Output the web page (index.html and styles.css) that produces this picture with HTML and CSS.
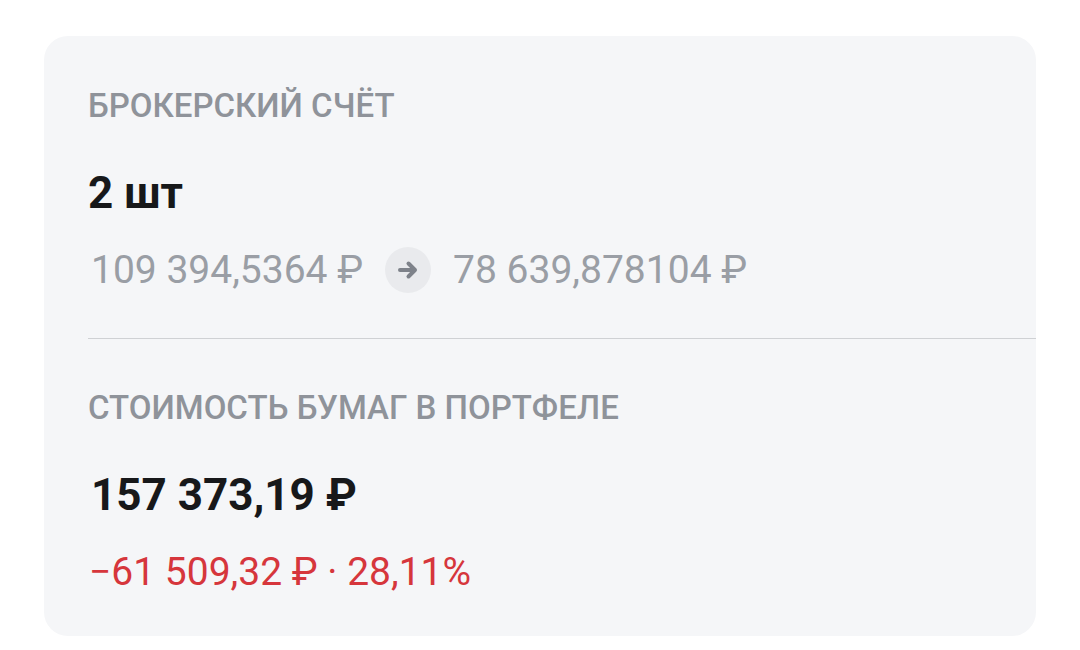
FILE: index.html
```html
<!DOCTYPE html>
<html lang="ru">

<head>
    <meta charset="UTF-8">
    <meta name="viewport" content="width=device-width, initial-scale=1.0">
    <title>Брокерский счёт</title>
    <link rel="stylesheet" href="styles.css">
</head>

<body>
    <div class="card">
        <div class="section">
            <div class="label">Брокерский счёт</div>
            <div class="qty">2 шт</div>
            <div class="prices">
                <span>109 394,5364 ₽</span>
                <span class="arrow">
                    <svg width="24" height="24" viewBox="0 0 24 24">
                        <path d="M4 12h15M12.5 5.5 19 12l-6.5 6.5" fill="none" stroke="#7e828a" stroke-width="4"
                            stroke-linecap="round" stroke-linejoin="round" />
                    </svg>
                </span>
                <span>78 639,878104 ₽</span>
            </div>
        </div>
        <div class="section">
            <div class="label">Стоимость бумаг в портфеле</div>
            <div class="total">157 373,19 ₽</div>
            <div class="change">−61 509,32 ₽ · 28,11%</div>
        </div>
    </div>
</body>

</html>
```

FILE: styles.css
```css
body {
    margin: 0;
    background-color: #fff;
    font-family: Roboto, "Noto Sans", sans-serif;
    padding: 36px 44px 14px 44px;
}

.card {
    background-color: #f5f6f8;
    border-radius: 24px;
    padding-left: 44px;
    height: 600px;
    box-sizing: border-box;
}

.section {
    padding-top: 50px;
    padding-bottom: 44px;
}

.section + .section {
    border-top: 1px solid #cfd1d4;
    padding-top: 49px;
}

.label {
    font-size: 33px;
    line-height: 40px;
    font-weight: 500;
    text-transform: uppercase;
    color: #8f939a;
}

.qty,
.total {
    margin-top: 41px;
    font-size: 44px;
    line-height: 52px;
    font-weight: 700;
    color: #17181a;
}

.total {
    padding-left: 3px;
}

.prices {
    margin-top: 27px;
    padding-left: 3px;
    display: flex;
    align-items: center;
    gap: 22px;
    font-size: 39px;
    line-height: 48px;
    color: #9a9ea5;
}

.arrow {
    width: 46px;
    height: 46px;
    border-radius: 50%;
    background-color: #e9eaed;
    display: flex;
    align-items: center;
    justify-content: center;
}

.change {
    margin-top: 27px;
    padding-left: 1px;
    font-size: 39px;
    line-height: 48px;
    color: #d6363c;
}
```
